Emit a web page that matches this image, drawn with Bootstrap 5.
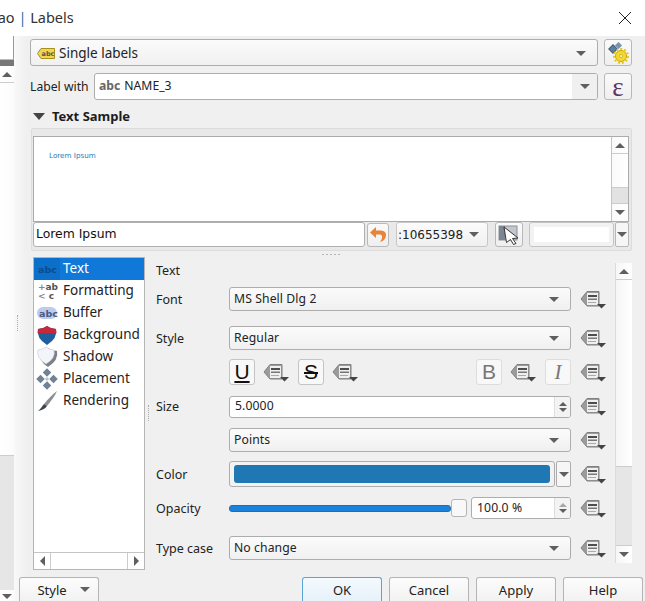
<!DOCTYPE html>
<html lang="en">
<head>
  <meta charset="UTF-8" />
  <title>Labels</title>
  <link href="https://cdn.jsdelivr.net/npm/bootstrap@5.3.3/dist/css/bootstrap.min.css" rel="stylesheet">
  <style>
    html, body { height: 601px; overflow: hidden; }
    body { background: #f0f0f0; font-family: "Noto Sans", sans-serif; font-size: 13.5px; color: #222; }
    .titlebar { height: 36px; background: #fff; padding: 0 13px 0 0; font-size: 14.5px; overflow: hidden; }
    .titlebar .ttl { margin-left: -8px; color: #333; }
    .titlebar .bar { color: #2a6f9f; }
    .dlg-body { height: 565px; }

    .side { width: 14px; background: linear-gradient(to right, #fff, #fbfbfb); }
    .side-top { height: 24px; background: #fff; border-right: 1px solid #9a9a9a; border-bottom: 1px solid #bbb; }
    .side-dark { height: 6px; background: #777; }
    .side-arrow { height: 17px; border-bottom: 1px solid #ccc; }
    .side-fill { flex: 1 1 auto; }
    .side-track { height: 135px; background: #e6e6e6; border-top: 1px solid #ccc; }
    .side-end { height: 11px; }

    .tri-d { width: 0; height: 0; border-left: 5px solid transparent; border-right: 5px solid transparent; border-top: 5px solid #5f5f5f; flex: none; }
    .tri-u { width: 0; height: 0; border-left: 5px solid transparent; border-right: 5px solid transparent; border-bottom: 5px solid #5f5f5f; flex: none; }
    .tri-l { width: 0; height: 0; border-top: 5px solid transparent; border-bottom: 5px solid transparent; border-right: 5px solid #5f5f5f; flex: none; }
    .tri-r { width: 0; height: 0; border-top: 5px solid transparent; border-bottom: 5px solid transparent; border-left: 5px solid #5f5f5f; flex: none; }

    .cbx { border: 1px solid #adadad; border-radius: 3px; background: linear-gradient(#fbfbfb, #f0f0f0); padding: 1px 11px 0 4px; white-space: nowrap; overflow: hidden; }
    .edit { background: #fff; }
    .tool { border: 1px solid #b8b8b8; border-radius: 3px; background: linear-gradient(#fafafa, #efefef); flex: none; }

    .main-col { padding-left: 5px; width: 631px; background: linear-gradient(to right, #f9f9f9, #f0f0f0 12px); }
    .top-area { padding-left: 11px; }
    .row-one { height: 27px; margin-top: 3px; width: 602px; }
    .row-one .cbx { width: 568px; height: 27px; padding-left: 6px; }
    .row-one .tool, .row-two .tool { width: 28px; height: 27px; margin-left: 6px; }
    .row-two { height: 27px; margin-top: 7px; width: 602px; font-size: 12.2px; }
    .row-two .lbl { width: 64px; flex: none; white-space: nowrap; padding-top: 1px; }
    .row-two .cbx { width: 504px; height: 27px; padding: 0 0 0 4px; }
    .row-two .drop { width: 25px; height: 25px; background: #f0f0f0; }
    .epsilon { font-family: "Liberation Serif", serif; font-size: 27px; line-height: 22px; color: #5c3566; }
    .abc-tag { font-weight: 700; color: #666; margin: 0 4px 0 0; }
    .sample-head { height: 20px; margin-top: 6px; padding-top: 1px; font-size: 13px; font-weight: 700; padding-left: 3px; color: #1c1c1c; }
    .sample-head .tri-d { border-left-width: 6px; border-right-width: 6px; border-top-width: 7px; border-top-color: #444; margin-right: 7px; }

    .sample-box { width: 601px; height: 123px; margin: 2px 0 0 1px; background: #e9e9e9; border: 1px solid #dcdcdc; border-radius: 2px; padding: 7px 2px 0 1px; }
    .preview { height: 86px; background: #fff; border: 1px solid #ababab; }
    .preview-txt { width: 578px; padding: 14px 0 0 15px; font-family: "DejaVu Sans", sans-serif; font-size: 7.2px; color: #2a7ab5; }
    .vbar { width: 17px; border-left: 1px solid #c4c4c4; background: linear-gradient(to right, #fafafa, #fff); }
    .vbar-btn { height: 17px; }
    .vbar-up { border-bottom: 1px solid #ccc; }
    .vbar-track { height: 17px; background: #e2e2e2; border-top: 1px solid #ccc; border-bottom: 1px solid #ccc; }
    .sample-tools { height: 25px; }
    .sample-text { width: 332px; height: 25px; background: #fff; border: 1px solid #b0b0b0; border-radius: 3px; padding-left: 2px; font-family: "DejaVu Sans", sans-serif; font-size: 12.4px; color: #111; }
    .undo-btn { width: 22px; height: 24px; margin-left: 2px; }
    .scale-box { width: 92px; height: 25px; margin-left: 7px; padding: 0 8px 0 1px; border-color: #c8c8c8; }
    .scale-box span { font-family: "DejaVu Sans", sans-serif; font-size: 12px; }
    .pick-btn { width: 28px; height: 25px; margin-left: 7px; }
    .bg-swatch { width: 85px; height: 25px; margin-left: 6px; border: 1px solid #c4c4c4; border-radius: 3px; background: #fff; box-shadow: inset 0 0 0 4px #f2f2f2; }
    .bg-drop { width: 14px; height: 25px; margin-left: 1px; border: 1px solid #b8b8b8; border-radius: 2px; background: #f6f6f6; }
    .grip-h { height: 6px; width: 601px; }
    .grip-h i { width: 2px; height: 1px; background: #b5b5b5; margin: 0 1px; display: block; }

    .opts { margin-left: 3px; height: 313px; }
    .opt-list { width: 112px; height: 313px; background: #fff; border: 1px solid #b5b5b5; }
    .opt-item { height: 22px; white-space: nowrap; padding-bottom: 2px; }
    .opt-item svg { width: 26px; height: 22px; flex: none; margin: 0 3px -2px 0; }
    .opt-item.sel { background: #0f78d8; color: #fff; }
    .opt-item.sel svg { background: #0c6fca; }
    .opt-spacer { flex: 1 1 auto; }
    .hbar { height: 17px; border-top: 1px solid #c4c4c4; }
    .hbar-end { width: 17px; }
    .hbar-end.lft { border-right: 1px solid #ccc; }
    .hbar-end.rgt { border-left: 1px solid #ccc; }

    .fields { display: grid; grid-template-columns: 64px 342px 27px; column-gap: 9px; grid-template-rows: 20px 38px 40px 28px 41px 26px 42px 26px 54px; align-items: center; margin: 3px 0 0 11px; height: 315px; font-size: 12.5px; }
    .fields > span { padding-top: 2px; white-space: nowrap; }
    .fields .cbx { height: 24px; font-size: 12.2px; letter-spacing: .1px; }
    .fields .dd { width: 27px; height: 19px; display: block; }
    .style-btns { height: 26px; }
    .fmt-btn { width: 26px; height: 26px; font-family: "Liberation Sans", sans-serif; font-size: 21px; line-height: 24px; text-align: center; color: #111; border-color: #c4c4c4; background: #f8f8f8; }
    .fmt-btn.off { color: #777; border-color: #ddd; }
    .fmt-btn i { font-family: "Liberation Serif", serif; }
    .spin { height: 22px !important; background: #fff !important; padding: 0 !important; }
    .spin-val { padding-left: 5px; flex: 1 1 auto; }
    .spin-arrows { width: 16px; height: 100%; border-left: 1px solid #ddd; background: #f3f3f3; gap: 2px; }
    .spin-arrows .tri-u, .spin-arrows .tri-d { border-left-width: 4px; border-right-width: 4px; }
    .spin-arrows .tri-d { border-top-width: 4px; }
    .spin-arrows .tri-u { border-bottom-width: 4px; }
    .color-wrap { height: 26px; }
    .color-btn { width: 326px; height: 26px; border: 1px solid #adadad; border-radius: 3px; background: #f2f2f2; padding: 3px 4px; }
    .color-fill { height: 100%; background: #1f77b4; border-radius: 3px; }
    .color-drop { width: 15px; height: 26px; margin-left: 1px; border: 1px solid #adadad; border-radius: 2px; background: #f6f6f6; }
    .track { width: 222px; height: 7px; background: #1a82dc; border: 1px solid #2b6ca8; border-radius: 3px; }
    .thumb { width: 16px; height: 18px; background: #f8f8f8; border: 1px solid #b5b5b5; border-radius: 3px; }
    .op-spin { width: 100px; margin-left: 4px; }
    .op-spin .tri-u { border-bottom-color: #a8a8a8; }

    .vscroll { width: 17px; height: 300px; margin: 6px 0 0 8px; background: linear-gradient(to right, #f6f6f6, #fff); border-left: 1px solid #dcdcdc; }
    .vscroll .vs-fill { flex: 1 1 auto; }
    .vscroll .vs-track { height: 80px; background: #e6e6e6; border-top: 1px solid #ccc; border-bottom: 1px solid #ccc; }

    .dlg-foot { height: 24px; margin-top: 7px; width: 624px; }
    .dlg-foot .btn { width: 80px; height: 24px; padding: 0; font-size: 13px; line-height: 22px; color: #222; background: linear-gradient(#fcfcfc, #f2f2f2); border: 1px solid #b4b4b4; border-radius: 3px 3px 0 0; border-bottom: 0; text-align: center; }
    .dlg-foot .btn.pri { border-color: #5da4d6; background: linear-gradient(#f4fafe, #e6f1f9); }
    .dlg-foot .style-menu { padding: 0 8px 0 0; display: flex; align-items: center; }
    .style-menu span:first-child { flex: 1 1 auto; padding-left: 4px; }
    .foot-btns { margin-left: auto; gap: 7px; }

    .dots-v { position: absolute; width: 1px; height: 16px; border-left: 1px dotted #aaa; }
    .dots-one { left: 17px; top: 315px; }
    .dots-two { left: 148px; top: 405px; }
  </style>
</head>
<body>

  <svg class="d-none">
    <symbol id="dd" viewBox="0 0 27 19">
      <polygon points="1,9 7,1.5 19,1.5 19,16 7,16" fill="#9b9b9b" stroke="#808080" />
      <rect x="7" y="3" width="11" height="12" fill="#efefef" />
      <rect x="8" y="5" width="9" height="2" fill="#4d4d4d" />
      <rect x="8" y="8.5" width="9" height="1.5" fill="#777" />
      <rect x="8" y="12" width="8" height="1" fill="#aaa" />
      <polygon points="17,14 26,14 21.5,18.5" fill="#444" />
    </symbol>
  </svg>

  <div class="titlebar d-flex align-items-center justify-content-between">
    <span class="ttl">rao <span class="bar">|</span> Labels</span>
    <svg width="14" height="14" viewBox="0 0 14 14"><path d="M1 1 13 13M13 1 1 13" stroke="#222" stroke-width="1" fill="none" /></svg>
  </div>

  <div class="dlg-body d-flex">
    <div class="side d-flex flex-column">
      <div class="side-top"></div>
      <div class="side-dark"></div>
      <div class="side-arrow d-flex align-items-center justify-content-center"><span class="tri-u"></span></div>
      <div class="side-fill"></div>
      <div class="side-track"></div>
      <div class="side-end d-flex justify-content-center pt-1"><span class="tri-d"></span></div>
    </div>

    <div class="main-col d-flex flex-column">
      <div class="top-area">
        <div class="row-one d-flex">
          <div class="cbx d-flex align-items-center justify-content-between">
            <span class="d-flex align-items-center">
              <svg width="18" height="11" viewBox="0 0 18 11" class="me-1"><path d="M4 .5H17.5V10.5H4L.5 5.5Z" fill="#f3d54e" stroke="#a98f1d" /><text x="4.5" y="8" font-family="DejaVu Sans" font-size="6.5" font-weight="700" fill="#555">abc</text></svg>
              Single labels
            </span>
            <span class="tri-d"></span>
          </div>
          <div class="tool d-flex align-items-center justify-content-center">
            <svg width="22" height="22" viewBox="0 0 22 22">
              <rect x="3" y="4" width="6" height="6" transform="rotate(45 6 7)" fill="#5f7f9c" stroke="#3e5a74" />
              <rect x="9" y="1" width="5" height="5" transform="rotate(45 11.5 3.5)" fill="#7b93aa" />
              <circle cx="14" cy="14" r="5.5" fill="#f4d92f" stroke="#c9a70f" />
              <circle cx="14" cy="14" r="7" fill="none" stroke="#e8c71a" stroke-width="2" stroke-dasharray="2 2" />
              <circle cx="14" cy="14" r="1.6" fill="#fff6b0" stroke="#b5960d" stroke-width=".6" />
            </svg>
          </div>
        </div>

        <div class="row-two d-flex align-items-center">
          <span class="lbl">Label with</span>
          <div class="cbx edit d-flex align-items-center justify-content-between">
            <span><span class="abc-tag">abc</span>NAME_3</span>
            <span class="drop d-flex align-items-center justify-content-center"><span class="tri-d"></span></span>
          </div>
          <div class="tool d-flex align-items-center justify-content-center">
            <span class="epsilon">ε</span>
          </div>
        </div>

        <div class="sample-head d-flex align-items-center"><span class="tri-d"></span>Text Sample</div>
      </div>

      <div class="top-area">
        <div class="sample-box">
          <div class="preview d-flex">
            <div class="preview-txt">Lorem Ipsum</div>
            <div class="vbar d-flex flex-column">
              <div class="vbar-btn vbar-up d-flex align-items-center justify-content-center"><span class="tri-u"></span></div>
              <div class="flex-grow-1"></div>
              <div class="vbar-track"></div>
              <div class="vbar-btn d-flex align-items-center justify-content-center"><span class="tri-d"></span></div>
            </div>
          </div>
          <div class="sample-tools d-flex align-items-center">
            <div class="sample-text d-flex align-items-center">Lorem Ipsum</div>
            <div class="tool undo-btn d-flex align-items-center justify-content-center">
              <svg width="18" height="17" viewBox="0 0 18 17"><path d="M7 1 1 6.5 7 12V8.5h3.5c2 0 3 1 2.5 3.5-.3 1.5-1 2.5-2 4 4-1 6-4 6-7 0-3.5-3-4.5-6-4.5H7Z" fill="#e8833a" /></svg>
            </div>
            <div class="cbx scale-box d-flex align-items-center justify-content-between"><span>:10655398</span><span class="tri-d"></span></div>
            <div class="tool pick-btn d-flex align-items-center justify-content-center">
              <svg width="24" height="21" viewBox="0 0 24 21">
                <rect x="2" y="2" width="18" height="14" fill="#c4c8ce" stroke="#8a9098" />
                <rect x="2" y="2" width="6" height="14" fill="#7d8791" />
                <path d="M7 3 21 14 15.5 14.5 19 19.5 16.5 20.5 13.5 15.5 9.500 18.5Z" fill="#fff" stroke="#222" stroke-width=".9" />
              </svg>
            </div>
            <div class="bg-swatch"></div>
            <div class="bg-drop d-flex align-items-center justify-content-center"><span class="tri-d"></span></div>
          </div>
        </div>
        <div class="grip-h d-flex align-items-center justify-content-center"><i></i><i></i><i></i><i></i><i></i></div>

        <div class="opts d-flex">
          <div class="opt-list d-flex flex-column">
            <div class="opt-item sel d-flex align-items-center">
              <svg viewBox="0 0 26 22"><text x="4" y="15" font-family="DejaVu Sans" font-size="9.5" font-weight="700" fill="#0b4c8c">abc</text></svg>Text
            </div>
            <div class="opt-item d-flex align-items-center">
              <svg viewBox="0 0 26 22"><text x="4" y="10" font-family="DejaVu Sans" font-size="9" font-weight="700" fill="#555"><tspan fill="#888">+</tspan>ab</text><text x="4" y="19" font-family="DejaVu Sans" font-size="9" font-weight="700" fill="#555"><tspan fill="#888">&lt;</tspan> c</text></svg>Formatting
            </div>
            <div class="opt-item d-flex align-items-center">
              <svg viewBox="0 0 26 22"><rect x="3" y="5" width="20" height="12" rx="6" fill="#bccbf0" /><text x="5" y="15" font-family="DejaVu Sans" font-size="9.5" font-weight="700" fill="#4a5a80">abc</text></svg>Buffer
            </div>
            <div class="opt-item d-flex align-items-center">
              <svg viewBox="0 0 26 22"><path d="M4 5Q9 5 13 2 17 5 22 5 24 14 13 21 2 14 4 5Z" fill="#1f5f9e" /><path d="M4 5Q9 5 13 2 17 5 22 5L22.5 9H3.5Z" fill="#c8283a" /></svg>Background
            </div>
            <div class="opt-item d-flex align-items-center">
              <svg viewBox="0 0 26 22"><path d="M6 5Q10 5 14 2 18 5 23 5 25 14 14 21 4 15 6 5Z" fill="#7d8088" /><path d="M4 4Q8 4 12 1 16 4 20 4 22 12 12 18 2 12 4 4Z" fill="#f3f5fb" stroke="#c5c8d5" stroke-width=".6" /></svg>Shadow
            </div>
            <div class="opt-item d-flex align-items-center">
              <svg viewBox="0 0 26 22">
                <g fill="#6f8296">
                  <rect x="10" y="1.5" width="6" height="6" transform="rotate(45 13 4.5)" />
                  <rect x="10" y="14.5" width="6" height="6" transform="rotate(45 13 17.5)" />
                  <rect x="3.5" y="8" width="6" height="6" transform="rotate(45 6.5 11)" />
                  <rect x="16.5" y="8" width="6" height="6" transform="rotate(45 19.5 11)" />
                </g>
                <rect x="11.5" y="9.5" width="3" height="3" transform="rotate(45 13 11)" fill="#b7c2cc" />
              </svg>Placement
            </div>
            <div class="opt-item d-flex align-items-center">
              <svg viewBox="0 0 26 22"><path d="M23 1C19 4 14 9 10 14L13 16C17 11 21 6 23 1Z" fill="#8a8f96" /><path d="M10 14 13 16C11 19 8 20 4 21 7 19 8 16 10 14Z" fill="#3f4347" /></svg>Rendering
            </div>
            <div class="opt-spacer"></div>
            <div class="hbar d-flex">
              <div class="hbar-end lft d-flex align-items-center justify-content-center"><span class="tri-l"></span></div>
              <div class="flex-grow-1"></div>
              <div class="hbar-end rgt d-flex align-items-center justify-content-center"><span class="tri-r"></span></div>
            </div>
          </div>

          <div class="fields">
            <span>Text</span><span></span><span></span>

            <span>Font</span>
            <div class="cbx d-flex align-items-center justify-content-between"><span>MS Shell Dlg 2</span><span class="tri-d"></span></div>
            <svg class="dd"><use href="#dd" /></svg>

            <span>Style</span>
            <div class="cbx d-flex align-items-center justify-content-between"><span>Regular</span><span class="tri-d"></span></div>
            <svg class="dd"><use href="#dd" /></svg>

            <span></span>
            <div class="style-btns d-flex align-items-center">
              <div class="tool fmt-btn"><u>U</u></div>
              <svg class="dd ms-2"><use href="#dd" /></svg>
              <div class="tool fmt-btn ms-2"><s>S</s></div>
              <svg class="dd ms-2"><use href="#dd" /></svg>
              <div class="tool fmt-btn off ms-auto">B</div>
              <svg class="dd ms-2"><use href="#dd" /></svg>
              <div class="tool fmt-btn off ms-2"><i>I</i></div>
            </div>
            <svg class="dd"><use href="#dd" /></svg>

            <span>Size</span>
            <div class="cbx spin d-flex align-items-center"><span class="spin-val">5.0000</span>
              <span class="spin-arrows d-flex flex-column align-items-center justify-content-center"><span class="tri-u"></span><span class="tri-d"></span></span>
            </div>
            <svg class="dd"><use href="#dd" /></svg>

            <span></span>
            <div class="cbx d-flex align-items-center justify-content-between"><span>Points</span><span class="tri-d"></span></div>
            <svg class="dd"><use href="#dd" /></svg>

            <span>Color</span>
            <div class="color-wrap d-flex">
              <div class="color-btn"><div class="color-fill"></div></div>
              <div class="color-drop d-flex align-items-center justify-content-center"><span class="tri-d"></span></div>
            </div>
            <svg class="dd"><use href="#dd" /></svg>

            <span>Opacity</span>
            <div class="d-flex align-items-center">
              <div class="track"></div>
              <div class="thumb"></div>
              <div class="cbx spin op-spin d-flex align-items-center"><span class="spin-val">100.0 %</span>
                <span class="spin-arrows d-flex flex-column align-items-center justify-content-center"><span class="tri-u"></span><span class="tri-d"></span></span>
              </div>
            </div>
            <svg class="dd"><use href="#dd" /></svg>

            <span>Type case</span>
            <div class="cbx d-flex align-items-center justify-content-between"><span>No change</span><span class="tri-d"></span></div>
            <svg class="dd"><use href="#dd" /></svg>
          </div>

          <div class="vscroll d-flex flex-column">
            <div class="vbar-btn vbar-up d-flex align-items-center justify-content-center"><span class="tri-u"></span></div>
            <div class="vs-fill"></div>
            <div class="vs-track"></div>
            <div class="vbar-btn d-flex align-items-center justify-content-center"><span class="tri-d"></span></div>
          </div>
        </div>
      </div>

      <div class="dlg-foot d-flex">
        <button class="btn style-menu" type="button"><span>Style</span><span class="tri-d"></span></button>
        <div class="foot-btns d-flex">
          <button class="btn pri" type="button">OK</button>
          <button class="btn" type="button">Cancel</button>
          <button class="btn" type="button">Apply</button>
          <button class="btn" type="button">Help</button>
        </div>
      </div>
    </div>
  </div>

  <div class="dots-v dots-one"></div>
  <div class="dots-v dots-two"></div>

  <script src="https://cdn.jsdelivr.net/npm/bootstrap@5.3.3/dist/js/bootstrap.bundle.min.js"></script>
</body>
</html>
